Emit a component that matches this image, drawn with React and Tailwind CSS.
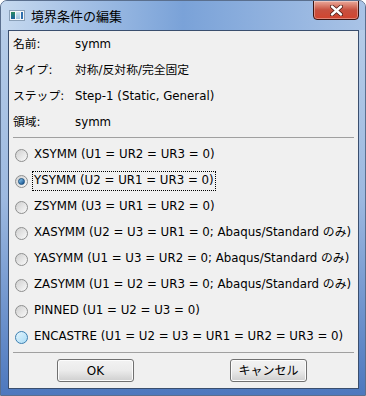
import React from 'react';

const rows = [
  { label: '名前:', value: 'symm' },
  { label: 'タイプ:', value: '対称/反対称/完全固定' },
  { label: 'ステップ:', value: 'Step-1 (Static, General)' },
  { label: '領域:', value: 'symm' },
];

const options = [
  'XSYMM (U1 = UR2 = UR3 = 0)',
  'YSYMM (U2 = UR1 = UR3 = 0)',
  'ZSYMM (U3 = UR1 = UR2 = 0)',
  'XASYMM (U2 = U3 = UR1 = 0; Abaqus/Standard のみ)',
  'YASYMM (U1 = U3 = UR2 = 0; Abaqus/Standard のみ)',
  'ZASYMM (U1 = U2 = UR3 = 0; Abaqus/Standard のみ)',
  'PINNED (U1 = U2 = U3 = 0)',
  'ENCASTRE (U1 = U2 = U3 = UR1 = UR2 = UR3 = 0)',
];

const Radio = ({ checked, hover }) => (
  <span
    className={`flex h-[13px] w-[13px] shrink-0 items-center justify-center rounded-full border ${
      hover ? 'border-[#3c7fb1] bg-gradient-to-br from-[#e3f4fc] to-[#a9dcf6]' : 'border-[#8e8f8f] bg-gradient-to-br from-[#cfcfcf] to-[#fafafa]'
    }`}
  >
    {checked && (
      <span className="h-[7px] w-[7px] rounded-full border border-[#1b4f7e] bg-gradient-to-br from-[#8fd0f5] to-[#0b4a88]" />
    )}
  </span>
);

const Button = ({ children }) => (
  <button className="h-[23px] w-[77px] rounded-[3px] border border-[#707070] bg-gradient-to-b from-[#f2f2f2] via-[#ebebeb] to-[#cfcfcf] text-[12px] text-black shadow-[inset_0_0_0_1px_#fcfcfc]">
    {children}
  </button>
);

export default function App() {
  return (
    <div
      className="relative h-[396px] w-[366px] overflow-hidden rounded-t-[7px] border border-[#5a6f8e] bg-gradient-to-b from-[#b9cfe9] via-[#9db9e0] to-[#4d78be] text-[11.8px] text-black"
      style={{ fontFamily: '"DejaVu Sans", "Noto Sans CJK JP", sans-serif' }}
    >
      <div className="flex h-[29px] items-start bg-gradient-to-r from-[#c6d9ef] via-[#7aa2d8] to-[#a9c3e6]">
        <div className="mt-[9px] ml-[8px] flex h-[11px] w-[16px] border border-[#8aa0b8] bg-[#f4f6f8]">
          <span className="m-[1px] w-[5px] bg-gradient-to-b from-[#2f8a5a] to-[#1d5f9e]" />
          <span className="my-[1px] w-[6px] bg-gradient-to-b from-[#cfe3f0] to-[#9cc1dc]" />
          <span className="m-[1px] w-[2px] bg-[#2f6fae]" />
        </div>
        <span className="mt-[6px] ml-[6px] text-[13px] text-black">境界条件の編集</span>
        <div className="ml-auto mr-[6px] flex h-[20px] w-[46px] -translate-y-px items-center justify-center rounded-b-[4px] border border-[#3c1410] bg-gradient-to-b from-[#e9a99b] via-[#c7503f] to-[#d2442e] shadow-[inset_0_0_0_1px_rgba(255,255,255,0.35)]">
          <svg width="13" height="11" viewBox="0 0 13 11">
            <path d="M2 1.5 L11 9.5 M11 1.5 L2 9.5" stroke="#4a1a14" strokeWidth="4" strokeLinecap="round" />
            <path d="M2 1.5 L11 9.5 M11 1.5 L2 9.5" stroke="#ffffff" strokeWidth="2.4" strokeLinecap="round" />
          </svg>
        </div>
      </div>

      <div className="ml-[7px] flex h-[359px] w-[351px] flex-col border border-[#3a4e6e] bg-[#f0f0f0] px-[4px] pt-[1px]">
        {rows.map((r) => (
          <div key={r.label} className="flex h-[26px] items-center">
            <span className="w-[62px] shrink-0">{r.label}</span>
            <span>{r.value}</span>
          </div>
        ))}
        <div className="mt-[1px] h-px bg-[#a0a0a0]" />
        <div className="mt-[4px] flex flex-col">
          {options.map((o, i) => (
            <div key={o} className="flex h-[26px] items-center pl-[2px]">
              <Radio checked={i === 1} hover={i === 7} />
              <span
                className={`ml-[4px] whitespace-nowrap px-px ${
                  i === 1 ? 'border border-dotted border-black' : 'border border-transparent'
                }`}
              >
                {o}
              </span>
            </div>
          ))}
        </div>
        <div className="mt-[2px] h-px bg-[#a0a0a0]" />
        <div className="mt-[6px] flex">
          <div className="ml-[44px]">
            <Button>OK</Button>
          </div>
          <div className="ml-[96px]">
            <Button>キャンセル</Button>
          </div>
        </div>
      </div>
    </div>
  );
}
